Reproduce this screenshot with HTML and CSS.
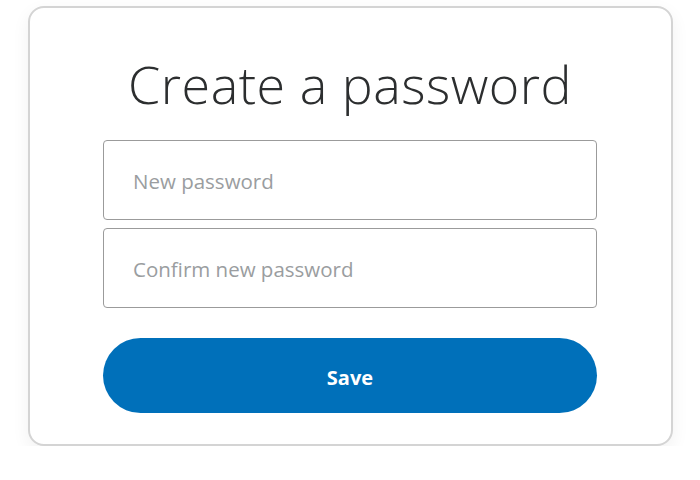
FILE: index.html
```html
<!DOCTYPE html>
<html lang="en">
<head>
    <meta charset="UTF-8">
    <meta name="viewport" content="width=device-width, initial-scale=1.0">
    <title>Create a password</title>
    <link rel="stylesheet" href="styles.css">
</head>
<body>
    <div class="card">
        <h1>Create a password</h1>
        <form class="pw-form">
            <input type="password" placeholder="New password">
            <input type="password" placeholder="Confirm new password">
            <button type="submit">Save</button>
        </form>
    </div>
</body>
</html>
```

FILE: styles.css
```css
* {
    margin: 0;
    padding: 0;
    box-sizing: border-box;
    font-family: "Open Sans", Arial, sans-serif;
}

body {
    background-color: #ffffff;
    padding: 6px 28px 0;
}

.card {
    width: 645px;
    height: 440px;
    border: 2px solid #d4d4d4;
    border-radius: 16px;
    background: white;
    box-shadow: 0 6px 18px rgba(0, 0, 0, 0.06);
    padding: 38px 74px 0 73px;
}

.card h1 {
    font-size: 52px;
    font-weight: 300;
    color: #2c2e2f;
    text-align: center;
    line-height: 76px;
    margin-bottom: 18px;
    letter-spacing: 0.5px;
}

.pw-form {
    display: flex;
    flex-direction: column;
}

.pw-form input {
    height: 80px;
    padding: 2px 29px 0;
    border: 1px solid #9b9b9b;
    border-radius: 4px;
    font-size: 20.5px;
    color: #2c2e2f;
    margin-bottom: 8px;
}

.pw-form input::placeholder {
    color: #9a9da0;
}

.pw-form button {
    height: 75px;
    margin-top: 22px;
    padding-top: 3px;
    border: none;
    border-radius: 38px;
    background-color: #0070ba;
    color: white;
    font-size: 20px;
    font-weight: bold;
    cursor: pointer;
}
```
